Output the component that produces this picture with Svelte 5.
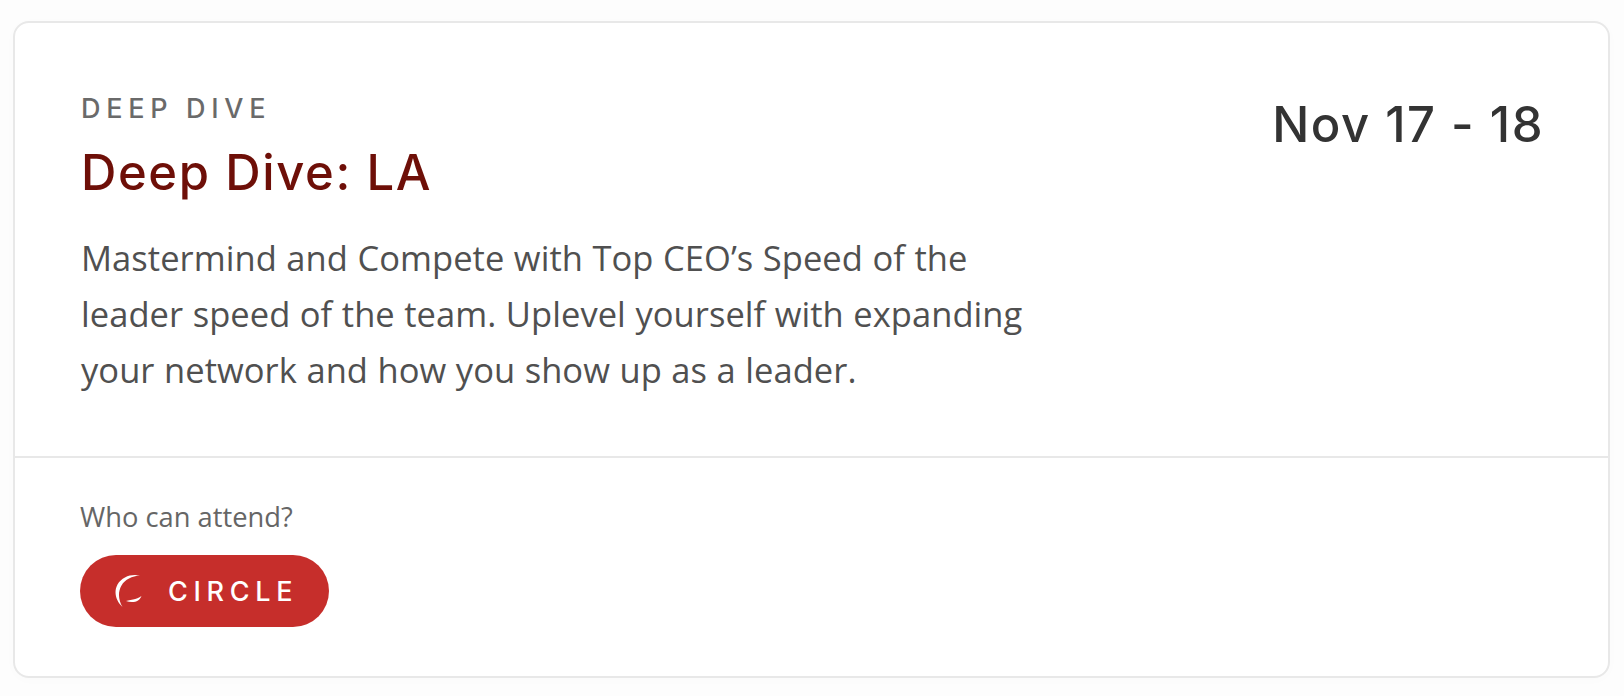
<script>
  const tier = 'CIRCLE';
</script>

<div class="page">
  <article class="card">
    <section class="top">
      <div class="info">
        <div class="eyebrow">DEEP DIVE</div>
        <h2 class="title">Deep Dive: LA</h2>
        <p class="desc">Mastermind and Compete with Top CEO’s Speed of the leader speed of the team. Uplevel yourself with expanding your network and how you show up as a leader.</p>
      </div>
      <div class="date">Nov 17 - 18</div>
    </section>
    <section class="bottom">
      <div class="who">Who can attend?</div>
      <div class="pill">
        <svg class="mark" viewBox="0 0 28 34" width="28" height="34" aria-hidden="true">
          <path d="M26 1.6C18 -0.6 8 2.5 3.5 10.5C-0.5 18 1.8 27 8.5 33C4.6 26.5 3.5 18.5 7.5 11.5C11 5.5 18 2.2 26 1.6Z" fill="#fff"/>
          <path d="M12 27C16 28.5 21 28.5 24 26.5C25.5 25.5 26.5 24 27.5 22C25 24 22 25 19 25.5C16.5 26 14 26.5 12 27Z" fill="#fff"/>
        </svg>
        <span>{tier}</span>
      </div>
    </section>
  </article>
</div>

<style>
  :global(body) {
    margin: 0;
    background: #fdfdfd;
  }
  .page {
    width: 1624px;
    height: 696px;
    box-sizing: border-box;
    padding: 21px 14px 18px 13px;
  }
  .card {
    height: 100%;
    box-sizing: border-box;
    background: #fff;
    border: 2px solid #e8e8e8;
    border-radius: 16px;
    box-shadow: 0 2px 12px rgba(0, 0, 0, 0.015);
    display: flex;
    flex-direction: column;
  }
  .top {
    height: 435px;
    box-sizing: border-box;
    padding: 72px 64px 0 66px;
    display: flex;
    justify-content: space-between;
    align-items: flex-start;
    border-bottom: 2px solid #e8e8e8;
  }
  .info {
    width: 975px;
  }
  .eyebrow {
    font-family: Inter, sans-serif;
    font-weight: 450;
    font-size: 27px;
    line-height: 28px;
    letter-spacing: 5.7px;
    color: #6a6a6a;
  }
  .title {
    margin: 20px 0 0;
    font-family: Inter, sans-serif;
    font-weight: 450;
    font-size: 49px;
    line-height: 60px;
    letter-spacing: 1.6px;
    color: #6e0f08;
  }
  .desc {
    margin: 27px 0 0;
    font-family: "Open Sans", sans-serif;
    font-size: 34.5px;
    line-height: 56px;
    letter-spacing: 0.05px;
    word-spacing: 0.5px;
    color: #505050;
  }
  .date {
    font-family: Inter, sans-serif;
    font-weight: 450;
    font-size: 49px;
    line-height: 60px;
    letter-spacing: 1.5px;
    color: #333;
  }
  .bottom {
    padding: 41px 65px 0;
  }
  .who {
    font-family: "Open Sans", sans-serif;
    font-size: 27.3px;
    line-height: 36px;
    color: #666;
  }
  .pill {
    margin-top: 20px;
    width: 249px;
    height: 72px;
    box-sizing: border-box;
    padding-left: 34px;
    background: #c62e2b;
    border-radius: 36px;
    display: flex;
    align-items: center;
    gap: 26px;
    font-family: Inter, sans-serif;
    font-weight: 500;
    font-size: 27px;
    letter-spacing: 5.7px;
    color: #fff;
  }
  .mark {
    flex: none;
  }
</style>
